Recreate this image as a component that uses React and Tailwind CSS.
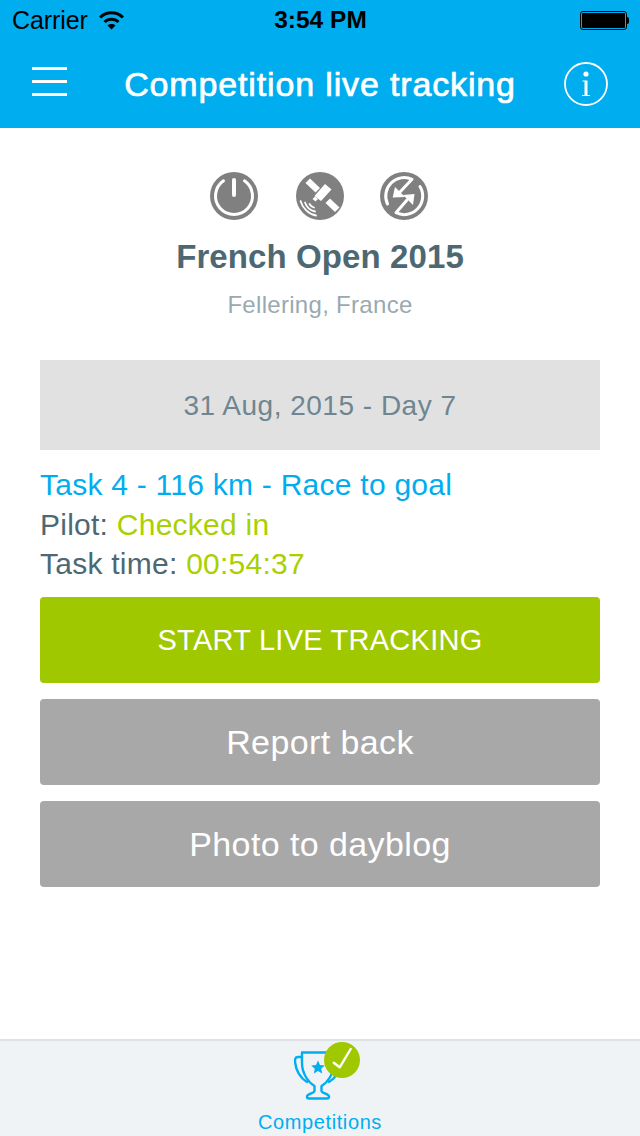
const font = { fontFamily: '"Liberation Sans", Arial, sans-serif' };

function StatusBar() {
  return (
    <div className="h-10 flex items-center justify-between pl-3 pr-[11px] text-black">
      <div className="flex items-center gap-[11px] w-[200px]">
        <span className="text-[25px] leading-none tracking-[-0.1px]">Carrier</span>
        <svg width="25" height="20" viewBox="0 0 25 20" fill="none">
          <path d="M1 7.500C7.500 1.300 17.500 1.300 24 7.500" stroke="black" strokeWidth="3" />
          <path d="M5.500 12C9.500 8.300 15.500 8.300 19.500 12" stroke="black" strokeWidth="3" />
          <path d="M8.500 15.500C10.800 13.600 14.200 13.600 16.500 15.500L12.500 19.500Z" fill="black" />
        </svg>
      </div>
      <span className="text-[24.500px] leading-none font-bold">3:54 PM</span>
      <div className="w-[200px] flex justify-end items-center">
        <div className="w-[47px] h-[19px] border border-black rounded-[3px] p-[1px]">
          <div className="w-full h-full bg-black rounded-[1px]" />
        </div>
        <div className="w-[2px] h-[7px] bg-black rounded-r-[2px]" />
      </div>
    </div>
  );
}

function NavBar() {
  return (
    <div className="h-[88px] flex items-center px-8">
      <div className="w-11 flex flex-col gap-[10px] pb-[5px]">
        <div className="w-[35px] h-[3px] bg-white" />
        <div className="w-[35px] h-[3px] bg-white" />
        <div className="w-[35px] h-[3px] bg-white" />
      </div>
      <h1 className="flex-1 text-center text-[34px] leading-none text-white tracking-[0.85px] [-webkit-text-stroke:0.7px_white]">
        Competition live tracking
      </h1>
      <svg width="44" height="44" viewBox="0 0 44 44" fill="none">
        <circle cx="22" cy="22" r="21" stroke="white" strokeWidth="1.800" />
        <circle cx="22" cy="12" r="2.600" fill="white" />
        <path d="M18.500 18.500H23.500V33H26V34H18V33H20.500V19.500H18.500Z" fill="white" />
      </svg>
    </div>
  );
}

function StatusIcons() {
  return (
    <div className="flex justify-center gap-[38px] pr-[3px]">
      <svg width="48" height="48" viewBox="0 0 48 48" fill="none">
        <circle cx="24" cy="24" r="24" fill="#808080" />
        <path d="M13.500 8.800A18.500 18.500 0 1 0 34.500 8.800" stroke="white" strokeWidth="3" strokeLinecap="round" />
        <rect x="22" y="6" width="4" height="19" rx="2" fill="white" />
      </svg>
      <svg width="48" height="48" viewBox="0 0 48 48" fill="none">
        <circle cx="24" cy="24" r="24" fill="#808080" />
        <path d="M14 6.500L9.500 11L19.500 20.500L24 16Z" fill="white" />
        <path d="M29.500 31L34 26.500L43.500 35.500L39 40Z" fill="white" />
        <path d="M29 12L35.500 17.500L25 29L18.500 24Z" fill="white" />
        <path d="M19 24.500L16.500 27L19.500 29.500L22 27Z" fill="white" />
        <path d="M4.500 29C6.500 36 12.500 42 20 43.500" stroke="white" strokeWidth="1.800" strokeLinecap="round" />
        <path d="M9 30.500C10.500 35 14.500 38.500 19 39.500" stroke="white" strokeWidth="1.800" strokeLinecap="round" />
        <path d="M13.500 32C14.500 33.800 16 35 18 35.500" stroke="white" strokeWidth="1.800" strokeLinecap="round" />
      </svg>
      <svg width="48" height="48" viewBox="0 0 48 48" fill="none" className="-ml-[2px]">
        <circle cx="24" cy="24" r="24" fill="#808080" />
        <path d="M7.500 32A18.500 18.500 0 0 1 32 7.300L20 20" stroke="white" strokeWidth="3" strokeLinecap="round" strokeLinejoin="round" />
        <path d="M40 14.500A18.500 18.500 0 0 1 16 40.700L27 28" stroke="white" strokeWidth="3" strokeLinecap="round" strokeLinejoin="round" />
        <path d="M15 15L12.700 25.500L25 25Z" fill="white" />
        <path d="M33 33L34.500 22L23 23Z" fill="white" />
      </svg>
    </div>
  );
}

function ActionButton({ label, className }) {
  return (
    <button className={`h-[86px] w-full rounded-[4px] pt-[2px] flex items-center justify-center text-white ${className}`}>
      {label}
    </button>
  );
}

function TabBar() {
  return (
    <div className="h-[97px] bg-[#f0f3f5] border-t-2 border-[#dfe2e4] flex flex-col items-center">
      <div className="relative w-[70px] h-[50px] mt-[9px]">
        <svg width="50" height="50" viewBox="0 0 50 50" fill="none" className="ml-[9px]">
          <path d="M8 2.500H40V13C40 24 33 33 27.500 36V41C27.500 43 35 44 35 46.500C35 48 34 48.500 33 48.500H15C14 48.500 13 48 13 46.500C13 44 20.500 43 20.500 41V36C15 33 8 24 8 13Z" stroke="#00adef" strokeWidth="2.400" strokeLinejoin="round" />
          <path d="M8 7H3.500C1 7 0.800 10 1.200 13C2 20 6 28 13 32" stroke="#00adef" strokeWidth="2.400" strokeLinecap="round" />
          <path d="M40 7H44.500C47 7 47.200 10 46.800 13C46 20 42 28 35 32" stroke="#00adef" strokeWidth="2.400" strokeLinecap="round" />
          <path d="M24 10.500L26 15L30.800 15.500L27.200 18.700L28.200 23.500L24 21L19.800 23.500L20.800 18.700L17.200 15.500L22 15Z" fill="#00adef" />
        </svg>
        <div className="absolute left-[39px] top-[-8px] size-9 rounded-full bg-[#9fc800]">
          <svg width="36" height="36" viewBox="0 0 36 36" fill="none">
            <path d="M9.700 20.700L15.700 25.300L26.700 7" stroke="white" strokeWidth="2.400" strokeLinecap="round" strokeLinejoin="round" />
          </svg>
        </div>
      </div>
      <span className="text-[20px] leading-none text-[#00adef] mt-[12px] tracking-[0.6px]">Competitions</span>
    </div>
  );
}

export default function App() {
  return (
    <div className="w-[640px] h-[1136px] bg-white flex flex-col" style={font}>
      <div className="bg-[#00adef]">
        <StatusBar />
        <NavBar />
      </div>
      <main className="flex-1 flex flex-col pt-11 px-10">
        <StatusIcons />
        <h2 className="text-[33px] leading-[32px] font-bold text-[#4d6872] text-center mt-[21px] tracking-[0.1px]">French Open 2015</h2>
        <p className="text-[24px] leading-none text-[#9aa9b0] text-center mt-[20px] tracking-[0.3px]">Fellering, France</p>
        <div className="h-[90px] bg-[#e1e1e1] mt-[43px] pt-[2px] flex items-center justify-center text-[28px] text-[#6f8690] tracking-[0.5px]">
          31 Aug, 2015 - Day 7
        </div>
        <div className="text-[30px] leading-[39.500px] mt-[15px] text-[#4d6872] tracking-[0.25px]">
          <p className="text-[#00adef]">Task 4 - 116 km - Race to goal</p>
          <p>Pilot: <span className="text-[#a9d000]">Checked in</span></p>
          <p>Task time: <span className="text-[#a9d000]">00:54:37</span></p>
        </div>
        <div className="flex flex-col gap-4 mt-[13px]">
          <ActionButton label="START LIVE TRACKING" className="bg-[#9fc800] text-[29px] tracking-[0.25px]" />
          <ActionButton label="Report back" className="bg-[#a8a8a8] text-[34px] tracking-[0.4px]" />
          <ActionButton label="Photo to dayblog" className="bg-[#a8a8a8] text-[34px] tracking-[0.4px]" />
        </div>
      </main>
      <TabBar />
    </div>
  );
}
